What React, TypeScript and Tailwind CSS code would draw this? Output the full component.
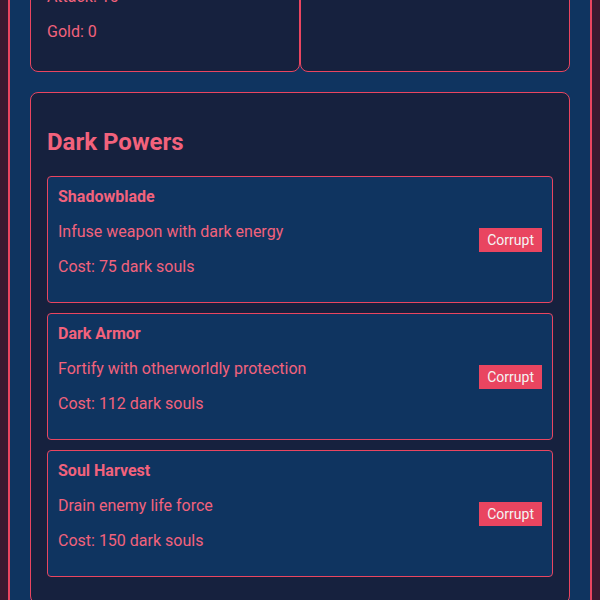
import { useLayoutEffect, useRef } from "react"

interface Power {
  name: string
  description: string
  cost: number
}

const powers: Power[] = [
  { name: "Shadowblade", description: "Infuse weapon with dark energy", cost: 75 },
  { name: "Dark Armor", description: "Fortify with otherworldly protection", cost: 112 },
  { name: "Soul Harvest", description: "Drain enemy life force", cost: 150 },
]

export default function App() {
  const viewRef = useRef<HTMLDivElement>(null)
  const powersRef = useRef<HTMLDivElement>(null)

  // page is shown scrolled down so the powers panel sits near the top
  useLayoutEffect(() => {
    const view = viewRef.current
    const panel = powersRef.current
    if (!view || !panel) return
    const offset = panel.getBoundingClientRect().top - view.getBoundingClientRect().top
    view.scrollTop = offset - 92
  }, [])

  return (
    <div
      ref={viewRef}
      className="h-screen overflow-hidden bg-[#3a1930] font-['Roboto','Liberation_Sans',sans-serif] leading-[normal] text-[#f2627c]"
    >
      <div className="m-2 border-2 border-[#e94560] bg-[#0f3460] p-5">
        <h1 className="my-5 text-center text-3xl leading-[normal] font-bold">Shadow Realm</h1>

        {/* Stats + inventory */}
        <div className="mb-5 grid grid-cols-2">
          <div className="rounded-lg border border-[#e94560] bg-[#16213e] p-4">
            <h2 className="mb-5 text-2xl leading-[normal] font-bold">Player</h2>
            <p className="my-4">Health: 100</p>
            <p className="my-4">Attack: 10</p>
            <p className="mt-4 mb-[14px]">Gold: 0</p>
          </div>
          <div className="rounded-lg border border-[#e94560] bg-[#16213e] p-4">
            <h2 className="mb-5 text-2xl leading-[normal] font-bold">Inventory</h2>
            <p className="my-4">Dark souls: 0</p>
          </div>
        </div>

        {/* Dark powers */}
        <div ref={powersRef} className="rounded-lg border border-[#e94560] bg-[#16213e] p-4">
          <h2 className="mt-[19px] mb-5 text-2xl leading-[normal] font-bold">Dark Powers</h2>
          {powers.map((power) => (
            <div
              key={power.name}
              className="mb-2.5 flex items-center justify-between rounded border border-[#e94560] bg-[#0f3460] p-2.5"
            >
              <div>
                <h3 className="text-base leading-[normal] font-bold">{power.name}</h3>
                <p className="mt-4">{power.description}</p>
                <p className="my-4">Cost: {power.cost} dark souls</p>
              </div>
              <button className="bg-[#e94560] px-2 py-1 text-sm leading-[normal] text-[#f4f4f4]">Corrupt</button>
            </div>
          ))}
        </div>
      </div>
    </div>
  )
}
